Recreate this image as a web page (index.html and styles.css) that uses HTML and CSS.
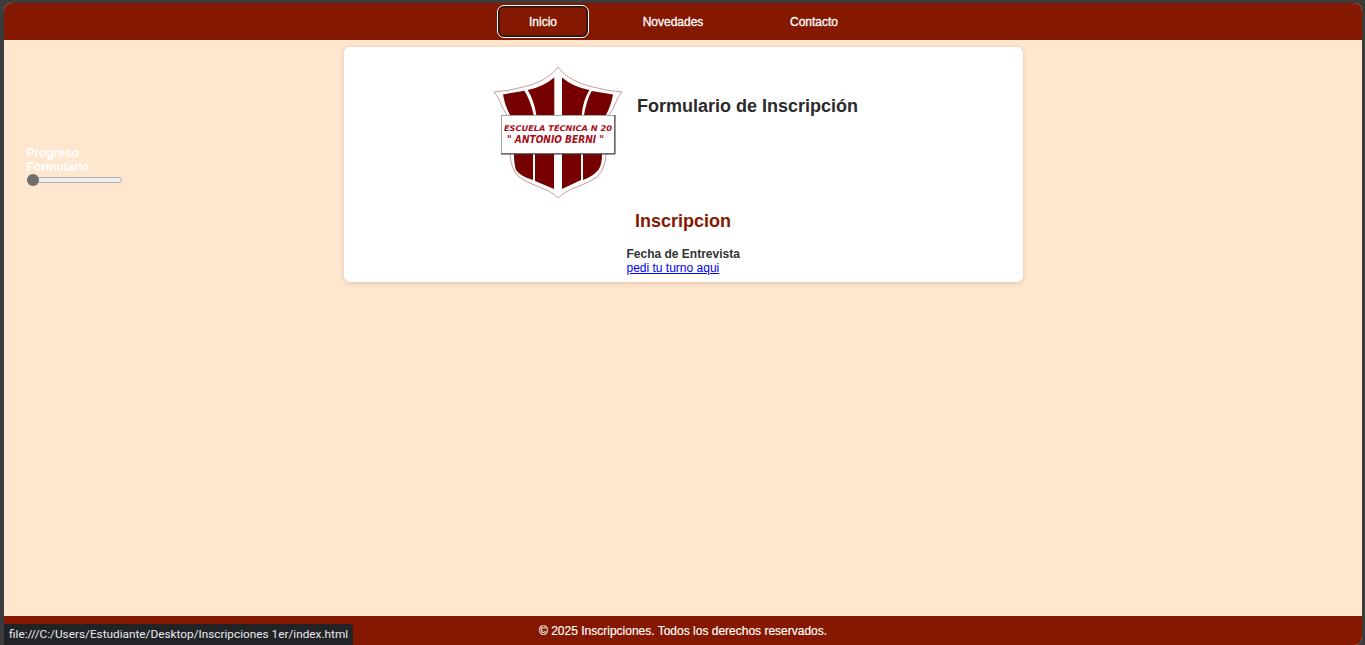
FILE: index.html
```html
<!DOCTYPE html>
<html lang="es">
<head>
<meta charset="utf-8">
<title>Inscripciones</title>
<link rel="stylesheet" href="styles.css">
</head>
<body>
<div class="frame">
  <div class="app">
    <header class="topbar">
      <nav class="nav">
        <a class="nav-link nav-active" href="#">Inicio</a>
        <a class="nav-link nav-news" href="#">Novedades</a>
        <a class="nav-link nav-contact" href="#">Contacto</a>
      </nav>
    </header>
    <main class="main">
      <aside class="progress">
        <label class="progress-label" for="progreso">Progreso Formulario</label>
        <input class="progress-range" id="progreso" type="range" min="0" max="100" value="0">
      </aside>
      <section class="card">
        <div class="card-head">
          <svg class="logo" viewBox="0 0 130 133" width="130" height="133" aria-label="Escudo">
            <path class="logo-outline" d="M65 1 C58 11 44 18 30 21 Q15 25 1 26 Q5 30 7 36 Q10 44 14 49 L17 89 Q18 103 26 111 Q33 116 46 121 Q58 125 65 132 Q72 125 84 121 Q97 116 104 111 Q112 103 113 89 L116 49 Q120 44 123 36 Q125 30 129 26 Q115 25 100 21 C86 18 72 11 65 1 Z"/>
            <path class="logo-fill" d="M10 28.5 L31.3 24.7 Q37 33 40.7 49 L17 49 Q12 40 10 28.5 Z"/>
            <path class="logo-fill" d="M34.7 24 Q50 21 61.3 11.5 L61.3 49 L43.3 49 Q41 34 34.7 24 Z"/>
            <path class="logo-fill" d="M69 11.5 Q80 21 96.5 24 Q90 34 88.7 49 L69 49 Z"/>
            <path class="logo-fill" d="M98.7 25 L120 28.5 Q118 40 113 49 L91 49 Q94 33 98.7 25 Z"/>
            <path class="logo-fill" d="M21 88 L40 88 L40 114 Q27 110 23 104 Q21 98 21 88 Z"/>
            <path class="logo-fill" d="M42 88 L61 88 L61 123 L42 115 Z"/>
            <path class="logo-fill" d="M69 88 L88 88 L88 114 L69 123 Z"/>
            <path class="logo-fill" d="M90 88 L109 88 Q109 98 106 103 Q101 110 90 114 Z"/>
            <rect class="logo-plate" x="8.5" y="49.5" width="113" height="38"/>
            <path class="logo-plate-shade" d="M122 49 L122 88 L8 88"/>
            <text class="logo-text" x="11" y="65" textLength="108" lengthAdjust="spacingAndGlyphs">ESCUELA TÉCNICA N 20</text>
            <text class="logo-text logo-text-big" x="14" y="76.7" textLength="97" lengthAdjust="spacingAndGlyphs">" ANTONIO BERNI "</text>
          </svg>
          <h1 class="title">Formulario de Inscripción</h1>
        </div>
        <h2 class="subtitle">Inscripcion</h2>
        <div class="field">
          <div class="field-label">Fecha de Entrevista</div>
          <a class="field-link" href="#">pedi tu turno aqui</a>
        </div>
      </section>
    </main>
    <footer class="footer">© 2025 Inscripciones. Todos los derechos reservados.</footer>
  </div>
  <div class="status">file:///C:/Users/Estudiante/Desktop/Inscripciones 1er/index.html</div>
</div>
</body>
</html>
```
FILE: styles.css
```css
* { box-sizing: border-box; }
html, body { margin: 0; height: 100%; overflow: hidden; }
body {
  background: #3c3c3c;
  font-family: "Liberation Sans", Arial, sans-serif;
  font-size: 12px;
}
.frame {
  position: relative;
  height: 645px;
  padding: 3px 3px 0 4px;
}
.app {
  height: 100%;
  display: flex;
  flex-direction: column;
  background: #fee6cf;
  border-radius: 8px;
  overflow: hidden;
}
.topbar {
  flex: none;
  height: 37px;
  background: #851800;
}
.nav {
  display: flex;
  padding: 2px 0 0 493px;
}
.nav-link {
  height: 33px;
  color: #fff;
  font-size: 12px;
  text-decoration: none;
  line-height: 35px;
  text-align: center;
  -webkit-text-stroke: 0.3px #fff;
}
.nav-active {
  width: 92px;
  background: #851800;
  border: 1px solid #fff;
  box-shadow: inset 0 0 0 1.5px #161616;
  border-radius: 7px;
  line-height: 33px;
}
.nav-news { width: 92px; margin-left: 38px; }
.nav-contact { width: 70px; margin-left: 60px; }
.main {
  flex: 1;
  display: flex;
  align-items: flex-start;
  min-height: 0;
}
.progress {
  width: 96px;
  margin: 106px 0 0 22px;
  flex: none;
}
.progress-label {
  display: block;
  color: #fff;
  font-weight: 700;
  font-size: 12px;
  line-height: 14px;
  width: 80px;
  padding-left: 0.5px;
}
.progress-range {
  display: block;
  width: 95px;
  height: 12px;
  margin: 0 0 0 1px;
  padding: 0;
  background: transparent;
  appearance: none;
  -webkit-appearance: none;
}
.progress-range::-webkit-slider-runnable-track {
  height: 6px;
  background: #efefef;
  border: 1px solid #b2b2b2;
  border-radius: 3px;
}
.progress-range::-webkit-slider-thumb {
  -webkit-appearance: none;
  width: 12px;
  height: 12px;
  margin-top: -4px;
  margin-left: -1px;
  border-radius: 50%;
  background: #6f6f6f;
}
.card {
  width: 679px;
  height: 235px;
  margin: 7px 0 0 222px;
  flex: none;
  background: #fff;
  border-radius: 6px;
  box-shadow: 0 1px 5px rgba(120, 80, 40, 0.22);
}
.card-head {
  display: flex;
  align-items: flex-start;
  padding: 19px 0 0 149px;
  height: 152px;
}
.logo { display: block; flex: none; }
.logo-outline { fill: #fff; stroke: #bd8086; stroke-width: 0.8; }
.logo-fill { fill: #760000; }
.logo-plate { fill: #fff; stroke: #a8a8a8; stroke-width: 1; }
.logo-plate-shade { fill: none; stroke: #333; stroke-width: 1; }
.logo-text {
  font-family: "DejaVu Sans", sans-serif;
  font-style: italic;
  font-weight: 700;
  font-size: 7.8px;
  fill: #a50d1a;
}
.logo-text-big { font-size: 9.6px; }
.title {
  margin: 30px 0 0 14px;
  font-size: 18px;
  line-height: 21px;
  font-weight: 700;
  color: #2b2b2b;
  white-space: nowrap;
}
.subtitle {
  margin: 11px 0 0 291px;
  font-size: 18px;
  line-height: 22px;
  font-weight: 700;
  color: #851800;
}
.field { margin: 15px 0 0 282.5px; line-height: 14px; }
.field-label { font-weight: 700; color: #333; }
.field-link { color: #0000ee; }
.footer {
  flex: none;
  height: 29px;
  background: #851800;
  color: #fff;
  font-size: 12px;
  line-height: 30px;
  padding-left: 535px;
  -webkit-text-stroke: 0.15px #fff;
}
.status {
  position: absolute;
  left: 4px;
  bottom: 0;
  height: 21px;
  width: 349px;
  padding-left: 5px;
  background: #222326;
  color: #e8eaed;
  font-family: Roboto, "Noto Sans", sans-serif;
  font-size: 11.8px;
  line-height: 21px;
  border-top-right-radius: 4px;
  white-space: nowrap;
}
```
